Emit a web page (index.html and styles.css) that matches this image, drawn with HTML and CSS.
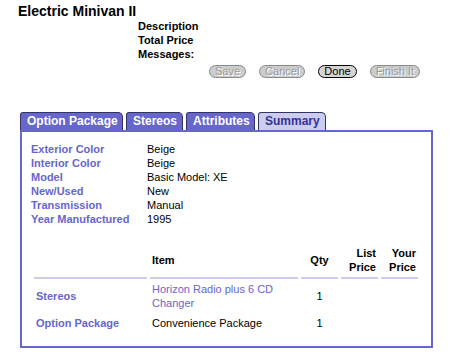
FILE: index.html
```html
<!DOCTYPE html>
<html>
<head>
<meta charset="utf-8">
<link rel="stylesheet" href="styles.css">
</head>
<body>
<div class="page">
  <h1 class="title">Electric Minivan II</h1>
  <div class="info">
    <div>Description</div>
    <div>Total Price</div>
    <div>Messages:</div>
  </div>
  <div class="buttons">
    <span class="btn off">Save</span>
    <span class="btn off">Cancel</span>
    <span class="btn on">Done</span>
    <span class="btn off">Finish It</span>
  </div>
  <div class="tabs">
    <span class="tab w1">Option Package</span>
    <span class="tab w2">Stereos</span>
    <span class="tab w3">Attributes</span>
    <span class="tab sel w4">Summary</span>
  </div>
  <div class="panel">
    <div class="attrs">
      <div class="k">Exterior Color</div><div class="v">Beige</div>
      <div class="k">Interior Color</div><div class="v">Beige</div>
      <div class="k">Model</div><div class="v">Basic Model: XE</div>
      <div class="k">New/Used</div><div class="v">New</div>
      <div class="k">Transmission</div><div class="v">Manual</div>
      <div class="k">Year Manufactured</div><div class="v">1995</div>
    </div>
    <div class="grid">
      <div class="h"></div>
      <div class="h">Item</div>
      <div class="h c">Qty</div>
      <div class="h r">List<br>Price</div>
      <div class="h r">Your<br>Price</div>

      <div class="d k2">Stereos</div>
      <div class="d link">Horizon Radio plus 6 CD Changer</div>
      <div class="d c">1</div>
      <div class="d"></div>
      <div class="d"></div>

      <div class="d k2">Option Package</div>
      <div class="d">Convenience Package</div>
      <div class="d c">1</div>
      <div class="d"></div>
      <div class="d"></div>
    </div>
  </div>
</div>
</body>
</html>
```
FILE: styles.css
```css
html, body { margin: 0; padding: 0; background: #fff; }
body { font-family: "Liberation Sans", Arial, sans-serif; font-size: 11px; color: #000; }
.page { padding: 3px 0 0 0; width: 458px; }
.title { margin: 0 0 0 18px; font-size: 14px; font-weight: bold; line-height: 16px; }
.info { margin: 0 0 0 138px; font-weight: bold; line-height: 14px; }
.buttons { display: flex; gap: 13px; margin: 4px 0 0 209px; }
.btn {
  display: inline-block; height: 11px; line-height: 11px; padding: 0 5px;
  border: 1px solid #808080; border-radius: 7px; background: #cccccc;
  font-size: 11px; text-align: center;
}
.btn.off { color: #9a9a9a; text-shadow: 1px 1px 0 #fff; border-color: #8a8a8a; }
.btn.on { color: #000; border-color: #000; background: #d4d4d4; }
.tabs { display: flex; gap: 3px; margin: 34px 0 0 20px; height: 18px; }
.tab {
  box-sizing: border-box; height: 18px; line-height: 17px; padding: 0 0 0 6px;
  background: #6666cc; color: #fff; font-weight: bold; font-size: 12px;
  border: 1px solid #333366; border-bottom: none; border-radius: 3px 5px 0 0;
  white-space: nowrap; overflow: hidden;
}
.tab.sel { background: #ccccee; color: #333399; }
.w1 { width: 103px; } .w2 { width: 57px; } .w3 { width: 69px; } .w4 { width: 68px; }
.panel {
  margin-left: 20px; width: 409px; height: 214px;
  border: 2px solid #6666cc; padding: 0;
}
.attrs {
  display: grid; grid-template-columns: 116px auto; margin: 10px 0 0 9px;
  line-height: 14px;
}
.k { color: #6666cc; font-weight: bold; }
.grid {
  display: grid; grid-template-columns: 113px 148px 37px 37px 37px;
  column-gap: 3px; margin: 20px 0 0 12px; line-height: 14px;
}
.h { font-weight: bold; border-bottom: 2px solid #ccccee; display: flex; align-items: center; padding: 0 2px 3px; }
.h.c { justify-content: center; }
.h.r { justify-content: flex-end; text-align: right; }
.d { padding: 3px 2px; display: flex; align-items: center; }
.d.c { justify-content: center; }
.k2 { color: #6666cc; font-weight: bold; }
.link { color: #6666cc; }
```
